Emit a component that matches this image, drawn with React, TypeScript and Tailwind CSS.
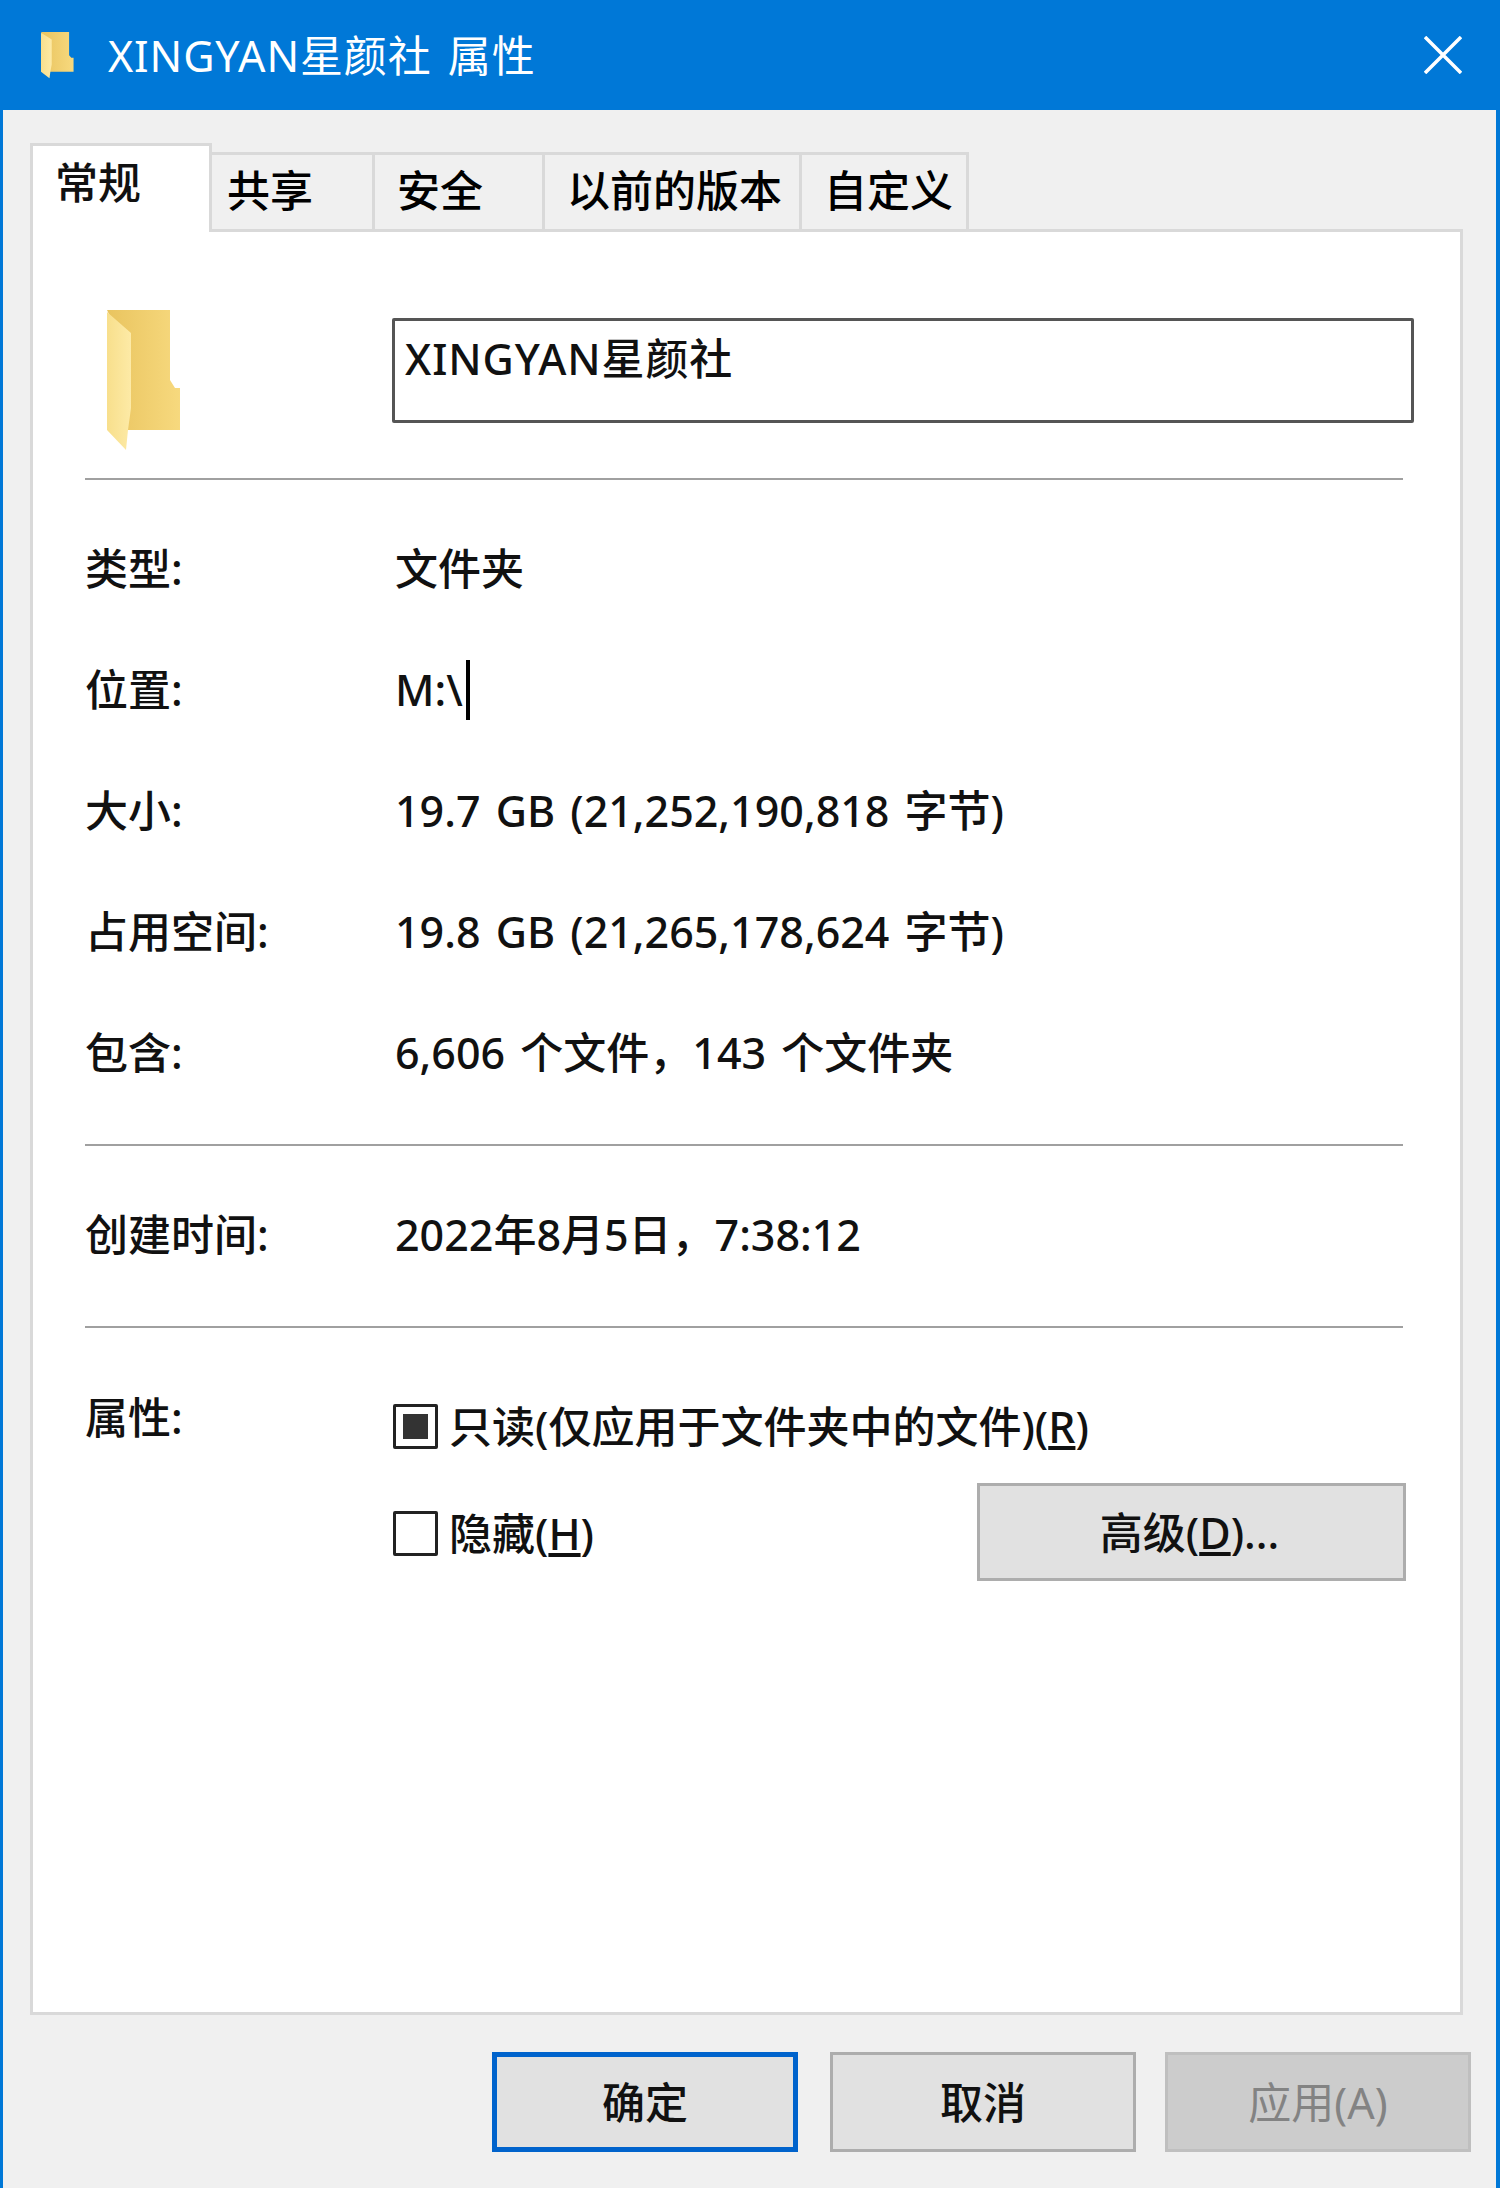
import React from "react";

const font = "font-['Noto_Sans','Noto_Sans_CJK_SC',sans-serif]";

function FolderIcon({ className }: { className: string }) {
  return (
    <svg className={className} viewBox="0 0 74 142" preserveAspectRatio="none">
      <defs>
        <linearGradient id="back" x1="0" y1="0" x2="1" y2="0">
          <stop offset="0" stopColor="#e9c45f" />
          <stop offset="1" stopColor="#f7d97e" />
        </linearGradient>
        <linearGradient id="front" x1="0" y1="0" x2="1" y2="0">
          <stop offset="0" stopColor="#f8df8c" />
          <stop offset="1" stopColor="#fdeaa6" />
        </linearGradient>
      </defs>
      <path d="M0 0H63V70L68 78H73V120H19V40Z" fill="url(#back)" />
      <path d="M0 2L24 23V98L21 120L19 140L0 120Z" fill="url(#front)" />
    </svg>
  );
}

function Tab({ label, className }: { label: string; className: string }) {
  return (
    <div className={`h-[77px] bg-[#f0f0f0] border-[3px] border-b-0 border-[#d9d9d9] flex items-center text-black pb-[3px] ${className}`}>
      {label}
    </div>
  );
}

function Divider({ className }: { className: string }) {
  return <div className={`h-[2px] bg-[#a0a0a0] mr-[57px] ${className}`} />;
}

function InfoRow({ label, children }: { label: string; children: React.ReactNode }) {
  return (
    <div className="grid grid-cols-[310px_1fr] h-[121px] items-center">
      <div>{label}</div>
      <div className="flex items-center">{children}</div>
    </div>
  );
}

function Checkbox({ checked }: { checked?: boolean }) {
  return (
    <div className="w-[45px] h-[45px] border-[3px] border-[#222] bg-white flex items-center justify-center rounded-[2px]">
      {checked && <div className="w-[25px] h-[25px] bg-[#333]" />}
    </div>
  );
}

function DialogButton({ label, className }: { label: React.ReactNode; className: string }) {
  return (
    <button className={`w-[306px] h-[100px] flex items-center justify-center ${className}`}>
      {label}
    </button>
  );
}

export default function App() {
  return (
    <div className={`${font} w-[1500px] h-[2188px] bg-[#f0f0f0] text-[43px] leading-none text-[#111] font-medium [word-spacing:4px] border-l-[3px] border-r-[4px] border-[#0078d7] flex flex-col`}>
      {/* Title bar */}
      <div className="h-[110px] bg-[#0078d7] shrink-0 flex items-center pl-[38px] pr-[34px] text-white">
        <FolderIcon className="w-[33px] h-[47px] mt-[1px]" />
        <div className="ml-[34px] flex-1 font-normal tracking-[0.9px]">XINGYAN星颜社 属性</div>
        <svg className="w-[38px] h-[38px]" viewBox="0 0 38 38">
          <path d="M1 1L37 37M37 1L1 37" stroke="white" strokeWidth="3.5" fill="none" />
        </svg>
      </div>

      {/* Tabs */}
      <div className="pl-[27px] pt-[33px] h-[119px] shrink-0 flex items-end relative z-10">
        <div className="w-[182px] h-[89px] -mb-[3px] bg-white border-[3px] border-b-0 border-[#d9d9d9] pl-[22px] pb-[13px] flex items-center">常规</div>
        <Tab label="共享" className="w-[163px] border-l-0 pl-[15px]" />
        <Tab label="安全" className="w-[170px] border-l-0 pl-[22px]" />
        <Tab label="以前的版本" className="w-[257px] border-l-0 pl-[22px]" />
        <Tab label="自定义" className="w-[167px] border-l-0 pl-[22px]" />
      </div>

      {/* General page */}
      <div className="ml-[27px] w-[1433px] h-[1786px] shrink-0 bg-white border-[3px] border-[#d9d9d9] pl-[52px] relative">
        <div className="mt-[86px] flex h-[105px]">
          <FolderIcon className="w-[74px] h-[142px] ml-[22px] -mt-[8px] shrink-0" />
          <div className="ml-[211px] w-[1022px] h-[105px] border-[3px] border-[#555] rounded-[2px] pl-[10px] pt-[16px] tracking-[0.9px]">
            XINGYAN星颜社
          </div>
        </div>
        <Divider className="mt-[55px]" />

        <div className="mt-[28px]">
          <InfoRow label="类型:">文件夹</InfoRow>
          <InfoRow label="位置:">
            <span>M:\</span>
            <span className="ml-[3px] w-[4px] h-[60px] bg-black" />
          </InfoRow>
          <InfoRow label="大小:">19.7 GB (21,252,190,818 字节)</InfoRow>
          <InfoRow label="占用空间:">19.8 GB (21,265,178,624 字节)</InfoRow>
          <InfoRow label="包含:">6,606 个文件，143 个文件夹</InfoRow>
        </div>
        <Divider className="mt-[31px]" />

        <div className="mt-[28px]">
          <InfoRow label="创建时间:">2022年8月5日，7:38:12</InfoRow>
        </div>
        <Divider className="mt-[31px]" />

        <div className="grid grid-cols-[308px_1fr] mt-[68px]">
          <div>属性:</div>
          <div>
            <div className="flex items-center gap-[11px] mt-[8px]">
              <Checkbox checked />
              <span>只读(仅应用于文件夹中的文件)(<u>R</u>)</span>
            </div>
            <div className="flex items-start mt-[34px]">
              <div className="flex items-center gap-[11px] mt-[28px]">
                <Checkbox />
                <span>隐藏(<u>H</u>)</span>
              </div>
              <button className="ml-auto mr-[54px] w-[429px] h-[98px] bg-[#e1e1e1] border-[3px] border-[#adadad] flex items-center justify-center pr-[4px]">
                高级(<u>D</u>)...
              </button>
            </div>
          </div>
        </div>
      </div>

      {/* Footer buttons */}
      <div className="flex pt-[37px] pl-[489px]">
        <DialogButton label="确定" className="bg-[#e1e1e1] border-[5px] border-[#0063cc]" />
        <DialogButton label="取消" className="ml-[32px] bg-[#e1e1e1] border-[3px] border-[#adadad]" />
        <DialogButton label="应用(A)" className="ml-[29px] bg-[#cccccc] border-[3px] border-[#bfbfbf] text-[#838383] font-normal" />
      </div>
    </div>
  );
}
